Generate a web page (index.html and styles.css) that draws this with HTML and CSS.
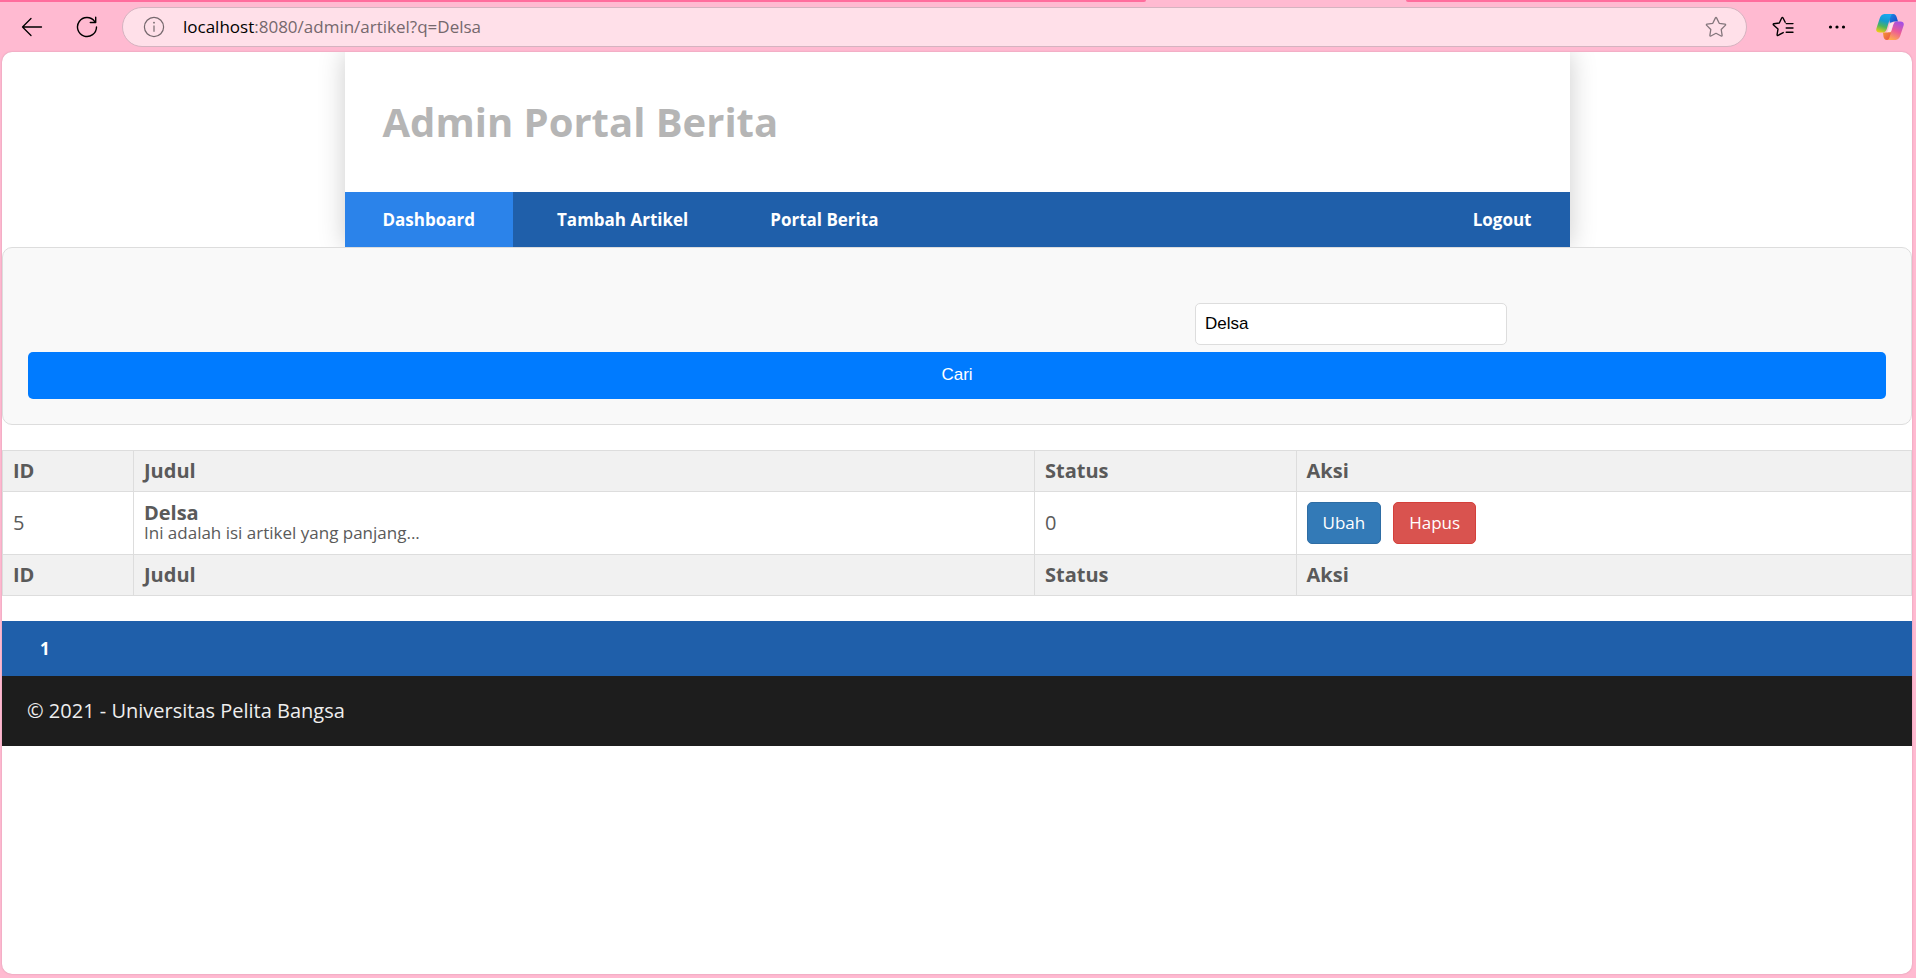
FILE: index.html
```html
<!DOCTYPE html>
<html lang="id">
<head>
<meta charset="utf-8">
<title>Admin Portal Berita</title>
<link rel="stylesheet" href="styles.css">
</head>
<body>
<div class="browser">
  <div class="tab-edge"><span class="edge edge-left"></span><span class="edge edge-right"></span></div>
  <div class="toolbar">
    <button class="tool" type="button" aria-label="Back">
      <svg width="22" height="22" viewBox="0 0 22 22" fill="none" stroke="#000" stroke-width="1.3" stroke-linecap="round" stroke-linejoin="round"><path d="M20.500 11H1.500M10 2.500L1.500 11l8.500 8.500"/></svg>
    </button>
    <button class="tool" type="button" aria-label="Reload">
      <svg width="22" height="22" viewBox="0 0 22 22" fill="none" stroke="#000" stroke-width="1.4" stroke-linecap="round" stroke-linejoin="round"><path d="M20.500 11A9.500 9.500 0 1 1 18.600 5.300M19.700 1.200v5.300h-5.400"/></svg>
    </button>
    <div class="address">
      <svg width="22" height="22" viewBox="0 0 22 22" fill="none" stroke="#75686d" stroke-width="1.2"><circle cx="11" cy="11" r="9.600"/><path d="M11 9.500v6.300"/><circle cx="11" cy="6.700" r=".9" fill="#75686d" stroke="none"/></svg>
      <span class="url"><span class="host">localhost</span>:8080/admin/artikel?q=Delsa</span>
      <button class="tool star" type="button" aria-label="Favorite">
        <svg width="22" height="22" viewBox="0 0 22 22" fill="none" stroke="#84767c" stroke-width="1.3" stroke-linejoin="round"><path d="M10.300 2.100q.7-1.300 1.400 0l2.500 5.200 5.700.9q1.300.3.4 1.200l-4.100 4.100.9 5.700q.1 1.200-1 .8L11 17.300 5.900 20q-1.100.4-1-.8l.9-5.700L1.700 9.400q-.9-.9.400-1.200l5.700-.9z"/></svg>
      </button>
    </div>
    <div class="actions">
      <button class="tool" type="button" aria-label="Favorites">
        <svg width="26" height="22" viewBox="0 0 26 22" fill="none" stroke="#000" stroke-width="1.4" stroke-linecap="round" stroke-linejoin="round"><path d="M11.200 16.600L6.100 19.300q-1.200.5-1-.8l.9-5.400L1.500 9q-.8-1 .4-1.200l5.400-.8L9.700 2q.7-1.200 1.400 0l2.100 4.200M14.200 7.600H21M14.200 12H21M14.200 16.300H21"/></svg>
      </button>
      <button class="tool" type="button" aria-label="Settings and more">
        <svg width="18" height="22" viewBox="0 0 18 22"><circle cx="2.500" cy="11" r="1.600"/><circle cx="9" cy="11" r="1.600"/><circle cx="15.500" cy="11" r="1.600"/></svg>
      </button>
      <button class="tool" type="button" aria-label="Copilot">
        <svg width="28" height="26" viewBox="0 0 28 26">
          <defs>
            <linearGradient id="cool" x1=".5" y1="0" x2=".2" y2="1"><stop offset="0" stop-color="#18a8ee"/><stop offset=".35" stop-color="#159bd0"/><stop offset=".65" stop-color="#4fb45c"/><stop offset="1" stop-color="#f3cf12"/></linearGradient>
            <linearGradient id="warm" x1=".7" y1="0" x2=".3" y2="1"><stop offset="0" stop-color="#a34fe5"/><stop offset=".5" stop-color="#ec5b98"/><stop offset="1" stop-color="#ffac4d"/></linearGradient>
            <linearGradient id="navy" x1="0" y1="0" x2="1" y2="1"><stop offset="0" stop-color="#1e8fe8"/><stop offset="1" stop-color="#163fc2"/></linearGradient>
            <linearGradient id="ember" x1="0" y1="0" x2="1" y2="1"><stop offset="0" stop-color="#f5a72c"/><stop offset="1" stop-color="#e8414f"/></linearGradient>
          </defs>
          <path fill="url(#navy)" d="M12 0h5.200c2.100 0 2.900 1.300 3.500 3.200L22 7.500h-3.500c-2.300 0-3.500 1.200-4.200 3.500z"/>
          <path fill="url(#ember)" d="M7 18.500h3.500c2.300 0 3.500-1 4.200-3.200L17 22l-4.500 4h-1.700c-2 0-2.800-1.400-3.300-3.300z"/>
          <path fill="url(#cool)" d="M17.300 0H8.500C5.800 0 4.300 2.300 3.500 5L.4 14.500C-.3 17 1 18.500 3.400 18.500h3.500c2 0 3.200-1.200 3.800-3.200l3.600-12C14.900 1.200 15.700 0 17.300 0z"/>
          <path fill="url(#warm)" d="M10.700 26h8.800c2.700 0 4.200-2.300 5-5l3.100-9.500c.7-2.500-.6-4-3-4h-3.500c-2 0-3.200 1.200-3.800 3.200l-3.600 12c-.6 2.100-1.400 3.300-3 3.300z"/>
          <path fill="#ffe0e9" d="M14.500 8.500h3.800q-1 1-1.400 2.600l-2.200 7.200h-4q1-1 1.400-2.600l1.500-5.200z"/>
        </svg>
      </button>
    </div>
  </div>
  <main class="viewport">
    <div class="container">
      <header class="masthead"><h1>Admin Portal Berita</h1></header>
      <nav class="bar">
        <a class="active" href="#">Dashboard</a>
        <a href="#">Tambah Artikel</a>
        <a href="#">Portal Berita</a>
        <a class="logout" href="#">Logout</a>
      </nav>
    </div>
    <form class="search">
      <input type="text" name="q" value="Delsa" aria-label="Cari data">
      <button type="submit">Cari</button>
    </form>
    <table class="articles">
      <colgroup><col class="col-id"><col class="col-title"><col class="col-status"><col></colgroup>
      <thead><tr><th>ID</th><th>Judul</th><th>Status</th><th>Aksi</th></tr></thead>
      <tbody>
        <tr>
          <td>5</td>
          <td><b>Delsa</b><p>Ini adalah isi artikel yang panjang...</p></td>
          <td>0</td>
          <td><div class="buttons"><a class="btn" href="#">Ubah</a><a class="btn btn-danger" href="#">Hapus</a></div></td>
        </tr>
      </tbody>
      <tfoot><tr><th>ID</th><th>Judul</th><th>Status</th><th>Aksi</th></tr></tfoot>
    </table>
    <nav class="bar"><a href="#">1</a></nav>
    <footer class="footer"><p>© 2021 - Universitas Pelita Bangsa</p></footer>
  </main>
</div>
</body>
</html>
```

FILE: styles.css
```css
* { box-sizing: border-box; }

body {
  margin: 0;
  background: #ffbad1;
  color: #5a5a5a;
  font-family: "Open Sans", "Noto Sans", sans-serif;
  font-size: 20px;
  line-height: 20px;
}

h1, p { margin: 0; }
a { text-decoration: none; }

.browser {
  display: flex;
  flex-direction: column;
  min-height: 100vh;
  padding: 0 4px 4px 2px;
}

/* Strip of the tab row, open under the active tab */
.tab-edge {
  display: flex;
  justify-content: space-between;
  height: 2px;
  margin: 0 -4px 0 -2px;
}
.edge { background: #ff6d9d; }
.edge-left { width: 59.8%; border-bottom-right-radius: 4px; }
.edge-right { width: 26.6%; border-bottom-left-radius: 4px; }

.toolbar {
  display: flex;
  align-items: center;
  height: 50px;
  padding: 0 8px 0 19px;
}
.tool {
  display: flex;
  padding: 0;
  border: 0;
  background: none;
}
.toolbar > .tool { margin-right: 33px; }
.toolbar > .tool + .tool { margin-right: 24px; }

.address {
  display: flex;
  flex: 1;
  align-items: center;
  gap: 18px;
  height: 40px;
  padding: 0 19px 0 20px;
  border: 1px solid #d5b3c0;
  border-radius: 20px;
  background: #ffe0e9;
}
.url {
  flex: 1;
  color: #75686d;
  font-size: 17px;
}
.host { color: #000; }

.actions {
  display: flex;
  align-items: center;
  gap: 30px;
  padding-left: 25px;
}

.viewport {
  flex: 1;
  overflow: hidden;
  border-radius: 10px;
  background: #fff;
  box-shadow: 0 0 2px #d090a8;
}

.container {
  width: 1225px;
  max-width: 100%;
  margin: 0 auto;
  box-shadow: 0 0 25px #ccc;
}
.masthead { padding: 50px 38px; }
.masthead h1 {
  color: #b5b5b5;
  font-size: 40px;
  line-height: 40px;
}

.bar {
  display: flex;
  gap: 6px;
  background: #1f5faa;
}
.bar a {
  padding: 15px 38px;
  color: #fff;
  font-size: 17px;
  font-weight: 700;
  line-height: 25px;
}
.bar .active { background: #2b83ea; }
.bar .logout { margin-left: auto; }

.search {
  position: relative;
  display: flex;
  flex-direction: column;
  margin-bottom: 25px;
  padding: 55px 25px 25px;
  border: 1px solid #ddd;
  border-radius: 10px;
  background: #f9f9f9;
}
.search input,
.search button {
  font-family: "Liberation Sans", Arial, sans-serif;
  font-size: 17px;
}
.search input {
  width: 312px;
  height: 42px;
  margin: 0 20.4% 7px auto;
  padding: 0 9px 1px;
  border: 1px solid #ddd;
  border-radius: 5px;
  background: #fff;
  color: #000;
}
.search button {
  height: 47px;
  padding: 0 0 1px;
  border: 0;
  border-radius: 5px;
  background: #007bff;
  color: #fff;
}

.articles {
  width: 100%;
  margin-bottom: 25px;
  border-collapse: collapse;
  table-layout: fixed;
}
.col-id { width: 6.86%; }
.col-title { width: 47.2%; }
.col-status { width: 13.7%; }
.articles th,
.articles td {
  padding: 10px;
  border: 1px solid #ddd;
  text-align: left;
}
.articles th { background: #f1f1f1; }
.articles p { font-size: 17px; }

.buttons { display: flex; gap: 12px; }
.btn {
  padding: 10px 15px;
  border: 1px solid #2e6da4;
  border-radius: 5px;
  background: #337ab7;
  color: #fff;
  font-size: 17px;
}
.btn-danger {
  border-color: #d43f3a;
  background: #d9534f;
}

.footer {
  padding: 25px;
  background: #1d1d1d;
  color: #eee;
}
```
